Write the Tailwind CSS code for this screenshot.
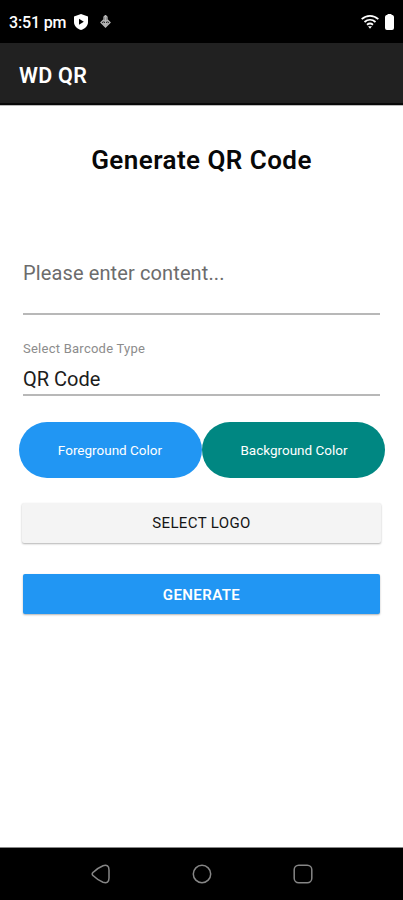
<!DOCTYPE html>
<html lang="en">
<head>
<meta charset="utf-8">
<title>WD QR</title>
<script src="https://cdn.jsdelivr.net/npm/@tailwindcss/browser@4"></script>
</head>
<body class="bg-white">
<div class="flex h-[900px] w-[403px] flex-col overflow-hidden bg-white font-[Roboto,sans-serif]">
  <div class="flex h-[43px] shrink-0 items-center bg-black pl-[9px] pr-[9px] text-white">
    <span class="w-[65px] whitespace-nowrap pt-[2px] text-[16px] font-medium leading-5 tracking-[-0.150px]">3:51 pm</span>
    <svg class="mt-px h-[16px] w-[14px]" viewBox="0 0 14 16"><path d="M7 0L14 2.500V8c0 4-3 6.800-7 8C3 14.800 0 12 0 8V2.500z" fill="#fff"/><path d="M5 4.700l4.800 3-4.800 3.100z" fill="#000"/></svg>
    <svg class="ml-[12px] h-[14px] w-[11px]" viewBox="0 0 11 14" fill="none" stroke="#b5b5b5" stroke-width="1.300"><path d="M5.500 0v10M4 2L5.500.5 7 2v4H4zM3.500 5L1 7.500l4.500 4.500 4.500-4.500L7.500 5M3 7.500L5.500 10 8 7.500"/></svg>
    <svg class="ml-auto h-[15px] w-[18px]" viewBox="0 0 18 15" fill="none" stroke="#fff" stroke-width="1.800"><path d="M.7 5.200c4.800-4.400 11.800-4.400 16.600 0M3.500 8c3.300-2.900 7.700-2.900 11 0M6 10.700c1.800-1.500 4.200-1.500 6 0"/><path d="M7 12.300h4l-2 2.500z" fill="#fff" stroke="none"/></svg>
    <svg class="ml-[6px] h-[16px] w-[9px]" viewBox="0 0 9 16"><path d="M2.500 0h4v1H7.500Q9 1.500 9 3v11q0 2-2 2H2q-2 0-2-2V3q0-1.500 1.500-2h1z" fill="#fff"/></svg>
  </div>
  <header class="flex h-[62px] shrink-0 items-center border-b-2 border-[#080808] bg-[#212121] pl-[19px] pt-[5px] text-white">
    <h1 class="text-[21.500px] font-semibold leading-6 tracking-[0.300px]">WD QR</h1>
  </header>
  <main class="flex flex-1 flex-col px-[23px] shadow-[inset_0_1px_0_#bbb]">
    <h2 class="mt-[39px] text-center text-[26px] font-semibold leading-8 tracking-[0.450px] text-[#080808]">Generate QR Code</h2>
    <div class="mt-[82px] h-[57px] border-b-2 border-[#b8b8b8] text-[20px] leading-[30px] tracking-[0.120px] text-[#6c6c6c]">Please enter content...</div>
    <label class="mt-[26px] text-[13px] leading-4 tracking-[0.250px] text-[#8c8c8c]">Select Barcode Type</label>
    <div class="mt-[6px] h-[33px] border-b-2 border-[#b8b8b8] text-[20px] leading-[32px] text-[#1c1c1c]">QR Code</div>
    <div class="-mx-[4.500px] mt-[26px] grid h-[56px] grid-cols-2 text-[13.500px] text-white">
      <button class="rounded-full bg-[#2196f3] pt-px">Foreground Color</button>
      <button class="rounded-full bg-[#008782] pl-[2px] pt-px">Background Color</button>
    </div>
    <button class="-mx-[1px] mt-[25px] h-[40px] rounded-[2px] bg-[#f4f4f4] pt-px text-[15px] tracking-[0.380px] text-[#151515] shadow-[0_1px_2px_rgba(0,0,0,0.300)]">SELECT LOGO</button>
    <button class="mt-[31px] h-[40px] rounded-[2px] bg-[#2196f3] pt-[3px] text-[15px] font-semibold tracking-[0.420px] text-white shadow-[0_1px_2px_rgba(0,0,0,0.300)]">GENERATE</button>
  </main>
  <nav class="flex h-[53px] shrink-0 items-center justify-center gap-[81px] border-t border-[#888] bg-black">
    <svg class="h-[20px] w-[20px]" viewBox="0 0 20 20" fill="none" stroke="#868686" stroke-width="1.500"><path d="M12 1.700Q18 0 18 6v8q0 6-6 4.300Q6.500 16 2.300 11.800 0 10 2.300 8.200 6.500 4 12 1.700z"/></svg>
    <svg class="h-[20px] w-[20px]" viewBox="0 0 20 20" fill="none" stroke="#868686" stroke-width="1.500"><circle cx="10" cy="10" r="8.700"/></svg>
    <svg class="h-[20px] w-[20px]" viewBox="0 0 20 20" fill="none" stroke="#868686" stroke-width="1.500"><rect x="1.200" y="1.200" width="17.600" height="17.600" rx="4.500"/></svg>
  </nav>
</div>
</body>
</html>
